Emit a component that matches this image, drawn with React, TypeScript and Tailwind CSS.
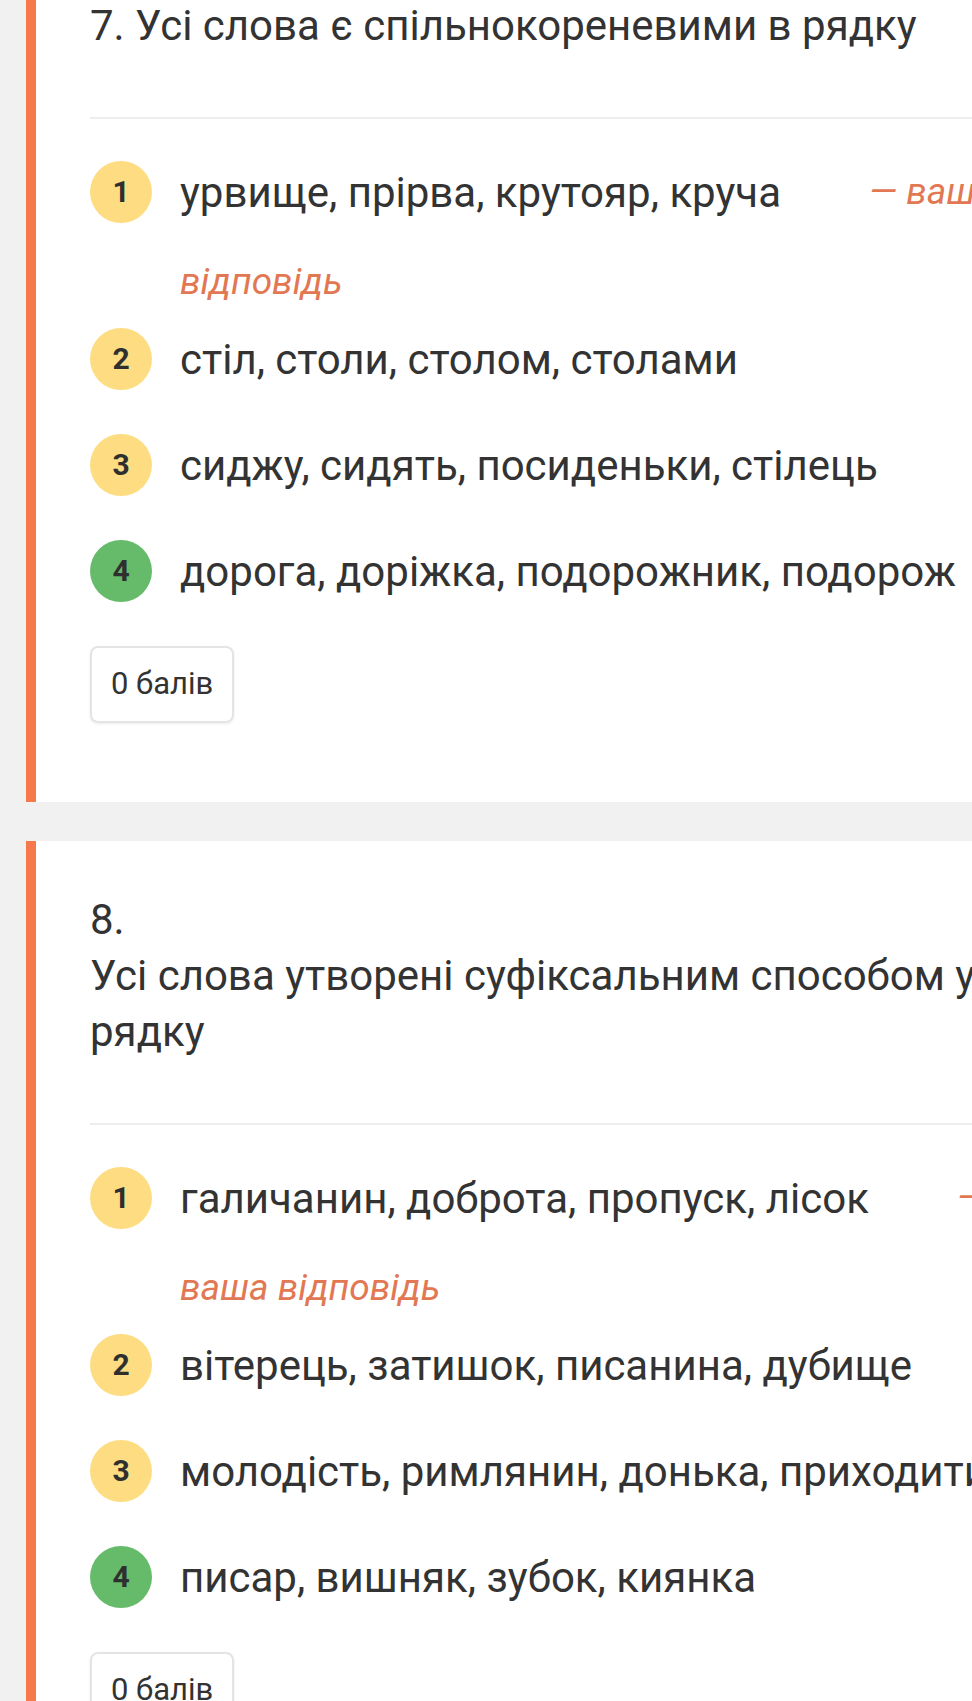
type Option = {
  num: number;
  text: string;
  correct?: boolean;
  note?: [string, string];
};

type Question = {
  num: number;
  title: string[];
  numOnOwnLine?: boolean;
  options: Option[];
  first?: boolean;
};

const questions: Question[] = [
  {
    num: 7,
    title: ["Усі слова є спільнокореневими в рядку"],
    first: true,
    options: [
      { num: 1, text: "урвище, прірва, крутояр, круча", note: ["— ваша", "відповідь"] },
      { num: 2, text: "стіл, столи, столом, столами" },
      { num: 3, text: "сиджу, сидять, посиденьки, стілець" },
      { num: 4, text: "дорога, доріжка, подорожник, подорож", correct: true },
    ],
  },
  {
    num: 8,
    title: ["Усі слова утворені суфіксальним способом у", "рядку"],
    numOnOwnLine: true,
    options: [
      { num: 1, text: "галичанин, доброта, пропуск, лісок", note: ["—", "ваша відповідь"] },
      { num: 2, text: "вітерець, затишок, писанина, дубище" },
      { num: 3, text: "молодість, римлянин, донька, приходити" },
      { num: 4, text: "писар, вишняк, зубок, киянка", correct: true },
    ],
  },
];

function Badge({ num, correct }: { num: number; correct?: boolean }) {
  const bg = correct ? "bg-[#66bb6a]" : "bg-[#fddc82]";
  return (
    <div
      className={`flex h-[62px] w-[62px] shrink-0 items-center justify-center rounded-full text-[30px] leading-none font-bold text-[#2f2f2f] ${bg}`}
    >
      {num}
    </div>
  );
}

function OptionRow({ option }: { option: Option }) {
  return (
    <li className={`flex items-start gap-[28px] ${option.note ? "pb-[29px]" : "pb-[44px]"}`}>
      <Badge num={option.num} correct={option.correct} />
      <div className="flex flex-col">
        <div className="flex h-[62px] items-center whitespace-nowrap">
          <span className="text-[42px] text-[#333]">{option.text}</span>
          {option.note && (
            <span className="ml-[88px] text-[37px] italic text-[#e27853]">{option.note[0]}</span>
          )}
        </div>
        {option.note && (
          <div className="mt-[42px] whitespace-nowrap text-[37px] leading-[34px] italic text-[#e27853]">
            {option.note[1]}
          </div>
        )}
      </div>
    </li>
  );
}

function QuestionCard({ q }: { q: Question }) {
  return (
    <section
      className={`border-l-[10px] border-[#f5794a] bg-white pt-[51px] pb-[79px] pl-[54px] ${
        q.first ? "mt-[-53px]" : ""
      }`}
    >
      <h2 className="whitespace-nowrap text-[42px] leading-[56px] text-[#333]">
        {q.numOnOwnLine ? (
          <>
            <div>{q.num}.</div>
            {q.title.map((line) => (
              <div key={line}>{line}</div>
            ))}
          </>
        ) : (
          <div>
            {q.num}. {q.title[0]}
          </div>
        )}
      </h2>
      <div className="mt-[63px] h-[2px] bg-[#eeeeee]" />
      <ol className="mt-[42px] flex flex-col">
        {q.options.map((o) => (
          <OptionRow key={o.num} option={o} />
        ))}
      </ol>
      <div className="inline-flex h-[77px] items-center rounded-[8px] border-2 border-[#e4e4e4] px-[19px] text-[31px] text-[#333] shadow-[0_1px_3px_rgba(0,0,0,0.08)]">
        0 балів
      </div>
    </section>
  );
}

export default function App() {
  return (
    <div className="h-[1701px] w-[972px] overflow-hidden bg-[#f1f1f1] pl-[26px] font-['Roboto',sans-serif]">
      <div className="flex w-[1100px] flex-col gap-[39px]">
        {questions.map((q) => (
          <QuestionCard key={q.num} q={q} />
        ))}
      </div>
    </div>
  );
}
